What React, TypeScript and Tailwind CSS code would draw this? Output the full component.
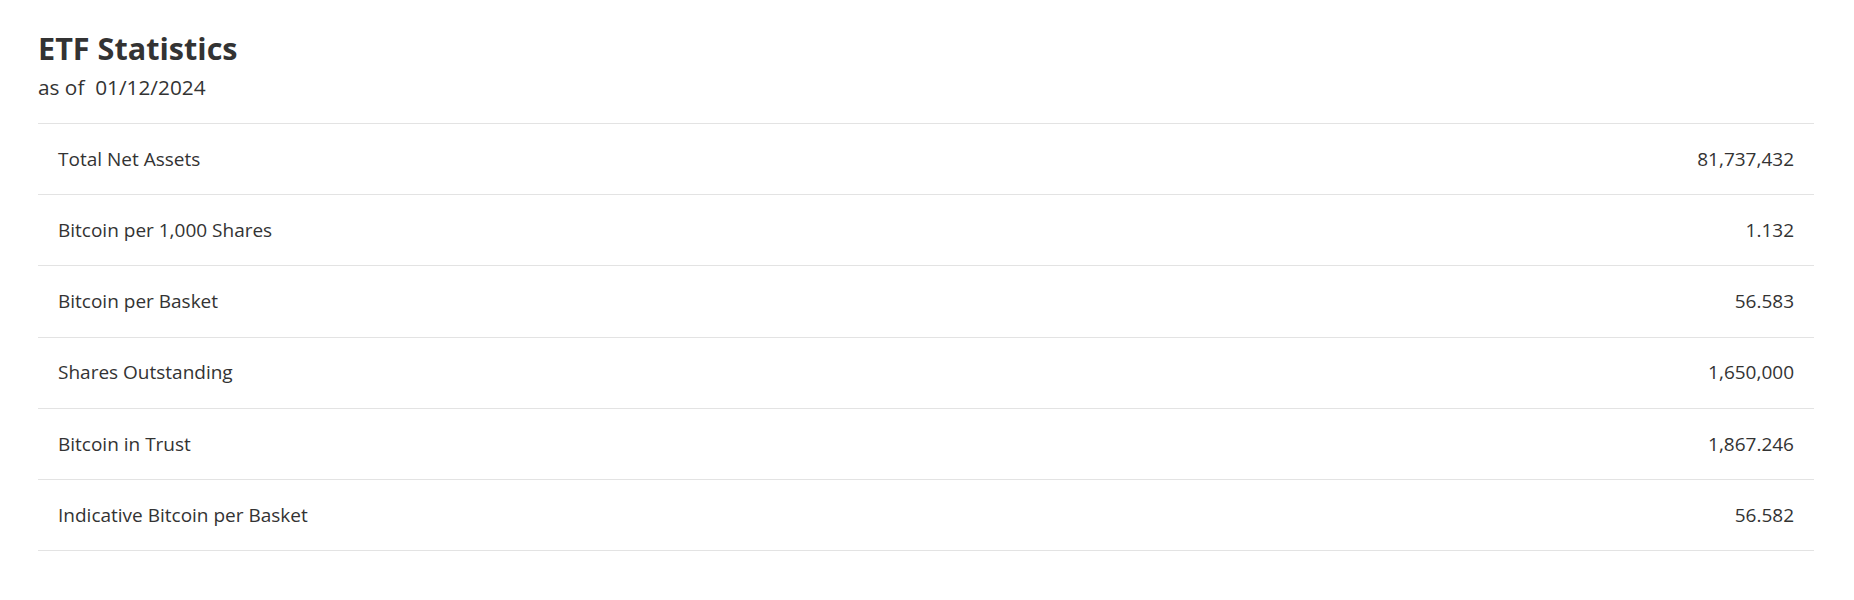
import React from "react";

const rows: [string, string][] = [
  ["Total Net Assets", "81,737,432"],
  ["Bitcoin per 1,000 Shares", "1.132"],
  ["Bitcoin per Basket", "56.583"],
  ["Shares Outstanding", "1,650,000"],
  ["Bitcoin in Trust", "1,867.246"],
  ["Indicative Bitcoin per Basket", "56.582"],
];

export default function App() {
  return (
    <div
      className="min-h-[600px] bg-white pl-[38px] pr-[40px] pt-[28px] text-[#333333]"
      style={{ fontFamily: '"Open Sans", "Noto Sans", sans-serif' }}
    >
      <h2 className="text-[30.6px] font-bold leading-[40px]">ETF Statistics</h2>
      <div className="mt-[5px] text-[20.8px] leading-[28px]">as of&nbsp; 01/12/2024</div>
      <div className="mt-[22px] border-t border-[#e3e3e3]">
        {rows.map(([label, value]) => (
          <div
            key={label}
            className="flex h-[71.2px] items-center justify-between border-b border-[#e3e3e3] px-[20px] text-[19px]"
          >
            <span>{label}</span>
            <span>{value}</span>
          </div>
        ))}
      </div>
    </div>
  );
}
